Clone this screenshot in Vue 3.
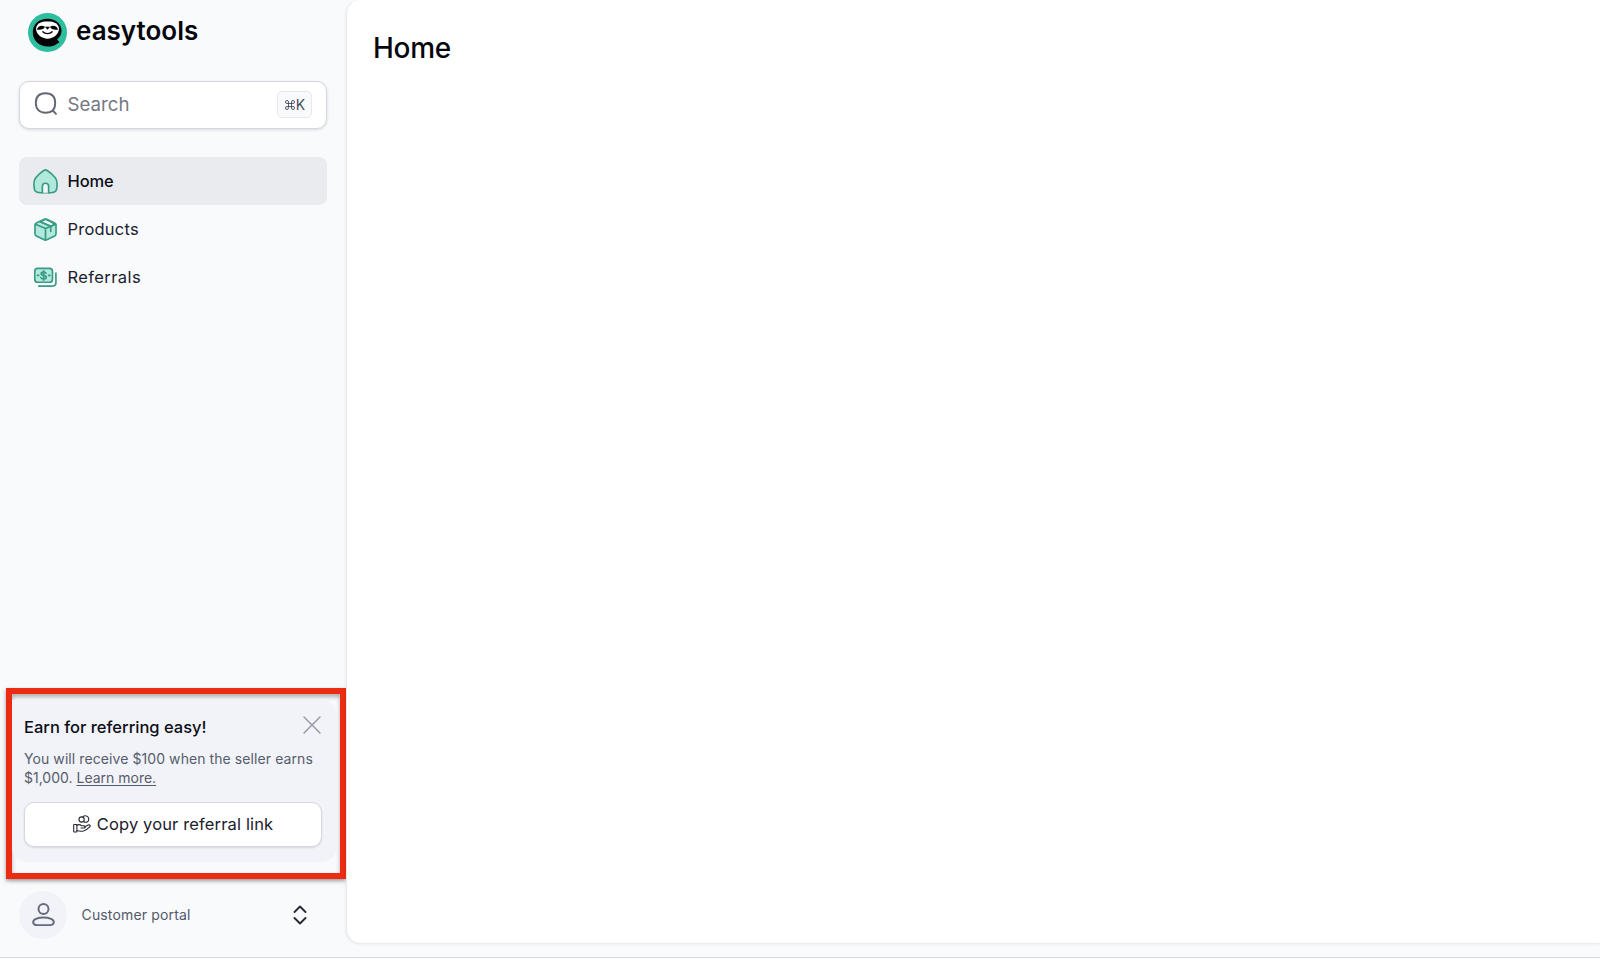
<script setup>
import { ref } from 'vue'

const items = [
  { id: 'home', label: 'Home' },
  { id: 'products', label: 'Products' },
  { id: 'referrals', label: 'Referrals' }
]

const active = ref('home')
const search = ref('')
const showPromo = ref(true)
</script>

<template>
  <div class="layout">
    <aside class="sidebar">
      <div class="brand">
        <svg class="brand-logo" viewBox="0 0 38 38">
          <circle cx="19" cy="19" r="19" fill="#2fbd9f" />
          <path d="M19 5.500c8 0 13.700 5 13.700 11.900 0 3.600-1.700 6.300-4.300 8.300l2.300 2.700-2 1.200c-2.800 2.500-5.900 3.100-9.200 3.100C11 32.700 4.700 27 4.700 18.500 4.700 10.500 11 5.500 19 5.500z" fill="#030506" />
          <path d="M19 8.200c3.200 0 6.200.3 8 1.800 1.500 1.300 3.200 3 3.200 5.200 0 5.500-5.500 9.900-11.200 9.900S7.800 20.700 7.800 15.200c0-2.200 1.700-3.900 3.200-5.200 1.800-1.500 4.800-1.800 8-1.800z" fill="#fff" />
          <path d="M8.500 16c2-3.900 5.200-4.300 8-2.700-.8 2.200-3.600 3.600-8 2.700zM29.500 16c-2-3.900-5.200-4.300-8-2.700.8 2.200 3.600 3.600 8 2.700z" fill="#030506" />
          <path d="M16.500 13.500h5L19 16.200z" fill="#030506" />
          <path d="M14.500 18.300c2 2.300 7 2.300 9 0" fill="none" stroke="#030506" stroke-width="1.300" stroke-linecap="round" />
        </svg>
        <span class="brand-name">easytools</span>
      </div>

      <label class="search">
        <svg class="search-icon" viewBox="0 0 24 24">
          <path d="M11.500 1.300c6.200 0 9.700 3.500 9.700 9.700s-3.500 9.700-9.700 9.700S1.800 17.200 1.800 11s3.500-9.700 9.700-9.700zM18.700 18.500l3.300 3.300" />
        </svg>
        <input v-model="search" type="text" placeholder="Search" />
        <kbd><svg viewBox="0 0 24 24"><path d="M9 9V6a3 3 0 1 0-3 3h12a3 3 0 1 0-3-3v12a3 3 0 1 0 3-3H6a3 3 0 1 0 3 3z" /></svg>K</kbd>
      </label>

      <nav class="nav">
        <a
          v-for="item in items"
          :key="item.id"
          class="nav-item"
          :class="[item.id, { active: active === item.id }]"
          @click="active = item.id"
        >
          <svg v-if="item.id === 'home'" class="nav-icon" viewBox="0 0 24 24">
            <path class="tint" d="M10.300 1.500c1.100-.8 2.300-.8 3.400 0 3.100 2.100 5.500 4.200 7.700 7 1.300 1.700 1.700 3.200 1.700 6 0 6.700-1.300 8.300-6 8.300H6.900c-4.700 0-6-1.600-6-8.300 0-2.800.4-4.300 1.700-6 2.200-2.800 4.600-4.900 7.700-7z" />
            <path class="plain" d="M9 22.800v-6c0-4.200 6-4.200 6 0v6" />
          </svg>
          <svg v-else-if="item.id === 'products'" class="nav-icon" viewBox="0 0 24 24">
            <path class="tint" d="M10.800 2.200c.8-.4 1.600-.4 2.400 0l7.600 3.600c1 .5 1.300 1.200 1.300 2.200v8c0 1-.3 1.700-1.300 2.200l-7.600 3.700c-.8.400-1.600.4-2.400 0l-7.600-3.700c-1-.5-1.300-1.200-1.300-2.200V8c0-1 .3-1.700 1.300-2.200z" />
            <path class="plain" d="M7 4.500l5-2.300 5.200 2.400 4 2.400-4.200 1.800z" />
            <path class="line" d="M2.300 7 12 11l9.700-4M12 11v11M7 4.500l10 4.300v5" />
          </svg>
          <svg v-else class="nav-icon" viewBox="0 0 24 24">
            <path class="line" d="M22 7.800v9c0 2.300-.8 3.400-3.200 3.400H5.500" />
            <rect class="tint" x="1.700" y="3.200" width="17" height="13.400" rx="3" />
            <path class="line" d="M12.500 8c-.5-1.500-4.700-1.600-4.700.3 0 2.400 4.900.9 4.900 3.500 0 2.200-4.500 2.100-5.200.2M10.200 5.600v8.900M4.300 10h1.200M15 10h1.200" />
          </svg>
          <span>{{ item.label }}</span>
        </a>
      </nav>

      <div class="bottom">
        <div class="highlight">
          <section v-if="showPromo" class="promo">
            <div class="promo-head">
              <h2>Earn for referring easy!</h2>
              <button class="close" aria-label="Close" @click="showPromo = false">
                <svg viewBox="0 0 18 18"><path d="M1 1l16 16M17 1L1 17" /></svg>
              </button>
            </div>
            <p>
              <span class="line-one">You will receive $100 when the seller earns</span>
              <span class="line-two">$1,000. <a>Learn more.</a></span>
            </p>
            <button class="copy">
              <svg viewBox="0 0 18 18">
                <rect x=".7" y="9.500" width="3.200" height="7.500" rx=".5" />
                <path d="M3.900 10.300c1.800-1.100 3.600-.6 4.800.5h2.200c1.700 0 1.700 2.200 0 2.200H8M11.500 12l3.700-1.900c1.700-.8 2.700.8 1.400 1.900-2.300 2-4.500 4.300-7.400 4.300-2 0-3.400-.6-5.300-.6" />
                <circle cx="8.600" cy="4.500" r="2.600" />
                <path d="M9.700 2c1.200-1.300 3.200-1.500 4.600-.6 1.900 1.200 1.900 4.200.2 5.300-1.300.8-2.500.7-3.600 0" />
              </svg>
              <span>Copy your referral link</span>
            </button>
          </section>
        </div>

        <div class="account">
          <span class="avatar">
            <svg viewBox="0 0 24 24">
              <circle cx="12" cy="6.800" r="4.800" />
              <path d="M12 14.900c6 0 9.900 2 9.900 4.400 0 2.100-1.400 2.900-4 2.900H6.100c-2.600 0-4-.8-4-2.900 0-2.400 3.900-4.400 9.900-4.400z" />
            </svg>
          </span>
          <span class="account-name">Customer portal</span>
          <svg class="chevrons" viewBox="0 0 14 20">
            <path d="M1.500 7 7 1.500 12.500 7M1.500 13 7 18.500l5.500-5.500" />
          </svg>
        </div>
      </div>
    </aside>

    <main class="content">
      <h1>Home</h1>
    </main>
  </div>
</template>

<style>
body {
  margin: 0;
  background: #f9fafc;
}
</style>

<style scoped>
.layout {
  display: flex;
  box-sizing: border-box;
  height: 958px;
  padding-bottom: 14px;
  overflow: hidden;
  border-bottom: 1px solid #d5d7da;
  background: #f9fafc;
  color: #0b0e17;
  font-family: Inter, "Liberation Sans", sans-serif;
}

svg {
  display: block;
  flex-shrink: 0;
  fill: none;
  stroke-linecap: round;
  stroke-linejoin: round;
}

h1,
h2,
p {
  margin: 0;
  font-weight: 500;
}

button {
  font-family: inherit;
}

.sidebar {
  display: flex;
  flex-direction: column;
  flex-shrink: 0;
  width: 346px;
}

/* Logo */
.brand {
  display: flex;
  align-items: center;
  height: 39px;
  margin: 13px 0 0 28px;
}

.brand-logo {
  width: 39px;
  height: 39px;
}

.brand-name {
  margin: -3px 0 0 9px;
  color: #05070c;
  font-size: 26px;
  font-weight: 600;
  line-height: 34px;
}

/* Search */
.search {
  display: flex;
  align-items: center;
  box-sizing: border-box;
  height: 48px;
  margin: 28.5px 19px 0;
  padding: 0 14px;
  border: 1px solid #d5d7dc;
  border-radius: 10px;
  background: #fff;
  box-shadow: 0 1px 3px rgba(20, 25, 40, 0.14);
}

.search-icon {
  width: 24px;
  height: 24px;
  margin-top: -2px;
  stroke: #636774;
  stroke-width: 1.9;
}

.search input {
  flex: 1;
  min-width: 0;
  margin-left: 9.5px;
  padding: 0;
  border: 0;
  outline: 0;
  background: none;
  font-family: inherit;
  font-size: 18.7px;
}

.search input::placeholder {
  color: #747782;
  opacity: 1;
}

kbd {
  display: flex;
  align-items: center;
  justify-content: center;
  box-sizing: border-box;
  width: 35px;
  height: 27px;
  border: 1px solid #e7e8eb;
  border-radius: 5px;
  background: #f9fafc;
  color: #454c5d;
  font-family: inherit;
  font-size: 14px;
}

kbd svg {
  width: 12px;
  height: 12px;
  stroke: #454c5d;
  stroke-width: 1.8;
}

/* Navigation */
.nav {
  display: flex;
  flex-direction: column;
  margin: 28.5px 19px 0;
}

.nav-item {
  display: flex;
  align-items: center;
  gap: 9.5px;
  height: 48px;
  padding-left: 14px;
  border-radius: 8px;
  color: #1b202d;
  font-size: 16.5px;
  font-weight: 400;
  letter-spacing: 0.22px;
  cursor: pointer;
}

.nav-item.active {
  background: #eaebef;
  color: #0b0e17;
  font-weight: 500;
  letter-spacing: -0.1px;
}

.nav-item.referrals {
  letter-spacing: 0.4px;
}

.nav-icon {
  width: 25px;
  height: 25px;
  stroke: #399b85;
  stroke-width: 1.6;
}

.tint {
  fill: #b1e9dd;
}

.plain {
  fill: #f1f8f8;
}

/* Referral promo */
.bottom {
  margin-top: auto;
}

.highlight {
  box-sizing: border-box;
  width: 340px;
  height: 191px;
  margin-left: 6px;
  padding-top: 6px;
  border: 6px solid #ec2b13;
  box-shadow: 0 2px 4px rgba(0, 0, 0, 0.38), inset 0 3px 4px rgba(0, 0, 0, 0.3);
}

.promo {
  box-sizing: border-box;
  width: 325px;
  height: 162px;
  padding: 14px 16px 0 12px;
  border-radius: 0 15px 15px 15px;
  background: #f2f3f8;
}

.promo-head {
  display: flex;
  justify-content: space-between;
}

.promo h2 {
  color: #0b0e17;
  font-size: 16.5px;
  line-height: 26px;
}

.close {
  width: 18px;
  height: 18px;
  margin-top: 2px;
  padding: 0;
  border: 0;
  background: none;
  cursor: pointer;
}

.close svg {
  stroke: #9296a4;
  stroke-width: 1.4;
}

.promo p {
  margin-top: 8.5px;
  color: #555c6c;
  font-size: 14px;
  font-weight: 400;
  line-height: 19px;
  white-space: nowrap;
}

.promo p span {
  display: block;
}

.promo p .line-one {
  letter-spacing: 0.08px;
}

.promo p a {
  text-decoration: underline;
  text-underline-offset: 2px;
}

.copy {
  display: flex;
  align-items: center;
  justify-content: center;
  gap: 6px;
  box-sizing: border-box;
  width: 298px;
  height: 45px;
  margin-top: 15.5px;
  padding: 0 0 1px;
  border: 1px solid #d7d8dd;
  border-radius: 10px;
  background: #fff;
  box-shadow: 0 1px 2px rgba(20, 25, 40, 0.12);
  color: #1b202d;
  font-size: 16.5px;
  font-weight: 400;
  letter-spacing: 0.14px;
  cursor: pointer;
}

.copy svg {
  width: 18px;
  height: 18px;
  stroke: #252a35;
  stroke-width: 1.1;
}

/* Account */
.account {
  display: flex;
  align-items: center;
  height: 48px;
  margin: 12px 39px 4px 19px;
}

.avatar {
  display: flex;
  align-items: center;
  justify-content: center;
  width: 48px;
  height: 48px;
  border-radius: 50%;
  background: #f2f3f8;
}

.avatar svg {
  width: 25px;
  height: 25px;
  margin-top: -2px;
  stroke: #656b7c;
  stroke-width: 1.9;
}

.account-name {
  margin: -2px 0 0 14.5px;
  color: #535968;
  font-size: 14px;
  letter-spacing: 0.16px;
}

.chevrons {
  width: 14px;
  height: 20px;
  margin: -1px 0 0 auto;
  stroke: #252a35;
  stroke-width: 1.9;
}

/* Content panel */
.content {
  box-sizing: border-box;
  flex: 1;
  padding: 29px 26px;
  border-left: 1px solid #e8e9ec;
  border-radius: 14px 0 0 14px;
  background: #fff;
  box-shadow: 0 1px 3px rgba(20, 25, 40, 0.1);
}

h1 {
  color: #05070c;
  font-size: 28px;
  letter-spacing: -0.3px;
  line-height: 38px;
}
</style>
